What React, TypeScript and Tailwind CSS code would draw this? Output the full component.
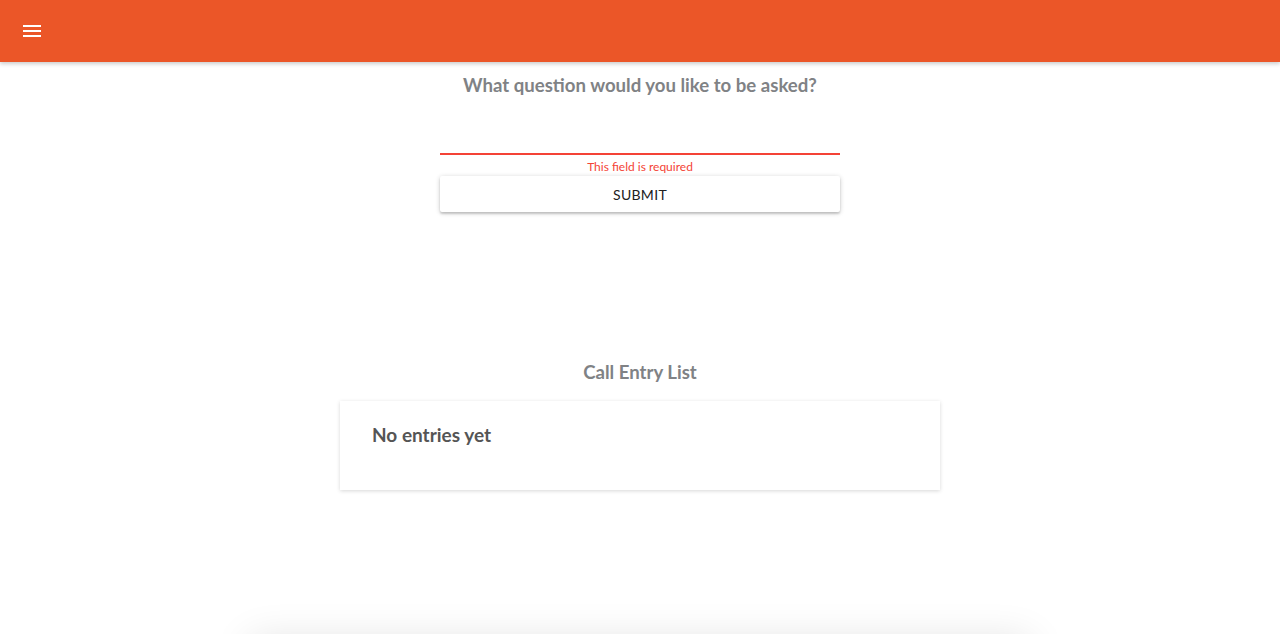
import React from "react";

export default function App() {
  return (
    <div className="relative min-h-[634px] bg-white overflow-hidden" style={{ fontFamily: "Lato, 'Noto Sans', sans-serif" }}>
      <header className="h-[62px] bg-[#eb5628] flex items-center px-5 shadow-[0_2px_4px_rgba(0,0,0,0.2)] relative z-10">
        <svg width="24" height="24" viewBox="0 0 24 24" fill="#ffffff">
          <path d="M3 18h18v-2H3v2zm0-5h18v-2H3v2zm0-7v2h18V6H3z" />
        </svg>
      </header>
      <main className="flex flex-col items-center">
        <h2 className="mt-[11px] text-[18.6px] leading-[24px] font-bold text-[#808285]">What question would you like to be asked?</h2>
        <div className="w-[400px] mt-[32px]">
          <div className="h-[24px]"></div>
          <div className="h-[2px] bg-[#f44336]"></div>
          <div className="text-[12px] leading-[16px] text-[#f44336] text-center mt-[4px]">This field is required</div>
          <button className="w-full h-[36px] mt-[1px] bg-white text-[14px] text-[#212121] tracking-[0.3px] shadow-[0_1px_5px_rgba(0,0,0,0.2),0_2px_2px_rgba(0,0,0,0.14)] rounded-[2px]">SUBMIT</button>
        </div>
        <h2 className="mt-[148px] text-[18.6px] leading-[24px] font-bold text-[#808285]">Call Entry List</h2>
        <div className="w-[600px] h-[89px] mt-[17px] bg-white shadow-[0_1px_4px_rgba(0,0,0,0.16)] px-8 pt-[22px]">
          <div className="text-[19px] leading-[24px] font-bold text-[#555555]">No entries yet</div>
        </div>
      </main>
      <div className="absolute left-[250px] top-[640px] w-[780px] h-[60px] bg-white shadow-[0_0_40px_rgba(0,0,0,0.12)]"></div>
    </div>
  );
}
